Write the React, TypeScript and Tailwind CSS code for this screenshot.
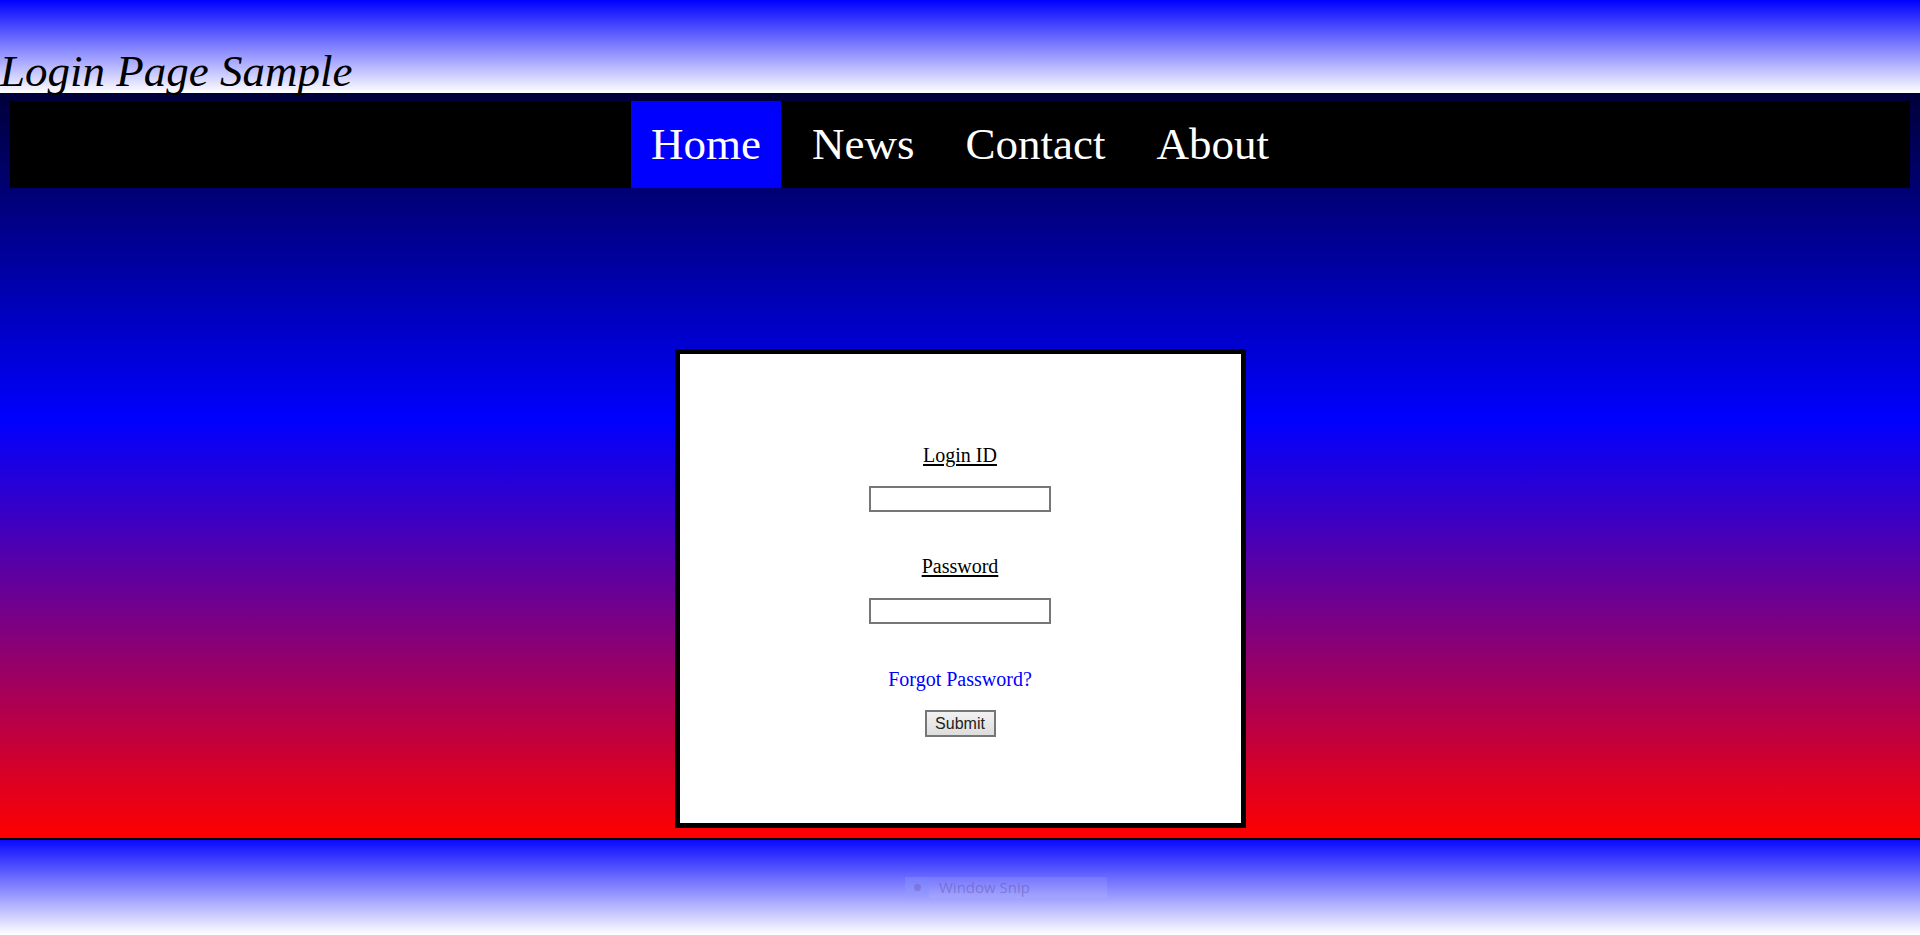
import React from "react";

const serif = { fontFamily: '"Liberation Serif", "Times New Roman", serif' };

const NavLink = ({ label, active }: { label: string; active?: boolean }) => {
  return (
    <a
      href="#"
      className={
        active
          ? "px-[20px] py-[18px] leading-[51px] text-white bg-[#0000ff]"
          : "px-[20px] py-[18px] leading-[51px] text-white"
      }
    >
      {label}
    </a>
  );
};

const App = () => {
  return (
    <div className="w-full h-[935px] overflow-hidden bg-white" style={serif}>
      {/* header */}
      <header className="h-[93px] bg-[linear-gradient(#0000ff,#ffffff)]">
        <h1 className="pt-[46px] text-[45px] leading-[50px] italic text-black font-normal" style={serif}>
          Login Page Sample
        </h1>
      </header>

      {/* main */}
      <main className="h-[745px] pt-[8px] bg-[linear-gradient(#000039,#0000ff_43.8%,#ff0000)]">
        <nav className="mx-[10px] h-[87px] bg-black flex justify-center gap-[11px] text-[45px]">
          <NavLink label="Home" active />
          <NavLink label="News" />
          <NavLink label="Contact" />
          <NavLink label="About" />
        </nav>

        <div className="mt-[161px] mx-auto w-[571px] h-[479px] border-[5px] border-black bg-white">
          <form className="pt-[90px] flex flex-col items-center text-[20px] leading-[23px] text-black">
            <label className="underline underline-offset-[2px]">Login ID</label>
            <input type="text" className="mt-[19px] w-[182px] h-[26px] border-2 border-[#767676] bg-white outline-none" />
            <label className="mt-[43px] underline underline-offset-[2px]">Password</label>
            <input type="password" className="mt-[20px] w-[182px] h-[26px] border-2 border-[#767676] bg-white outline-none" />
            <a href="#" className="mt-[44px] text-[#0000ff]">
              Forgot Password?
            </a>
            <button
              type="button"
              className="mt-[19px] w-[71px] h-[27px] border-2 border-[#767676] bg-[linear-gradient(#f2f2f2,#dddddd)] text-[16px] leading-[20px] text-[#222]"
              style={{ fontFamily: '"Liberation Sans", Arial, sans-serif' }}
            >
              Submit
            </button>
          </form>
        </div>
      </main>

      {/* footer */}
      <footer className="relative h-[97px] border-t-2 border-black bg-[linear-gradient(#0a0aff,#ffffff)]">
        <div className="absolute left-[905px] top-[37px] w-[202px] h-[21px] flex items-center bg-[rgba(210,210,240,0.12)]">
          <div className="w-[24px] h-full flex items-center justify-center bg-[rgba(120,140,255,0.25)]">
            <span className="w-[7px] h-[7px] rounded-full bg-[rgba(110,80,170,0.35)]"></span>
          </div>
          <span
            className="ml-[10px] text-[15px] text-[rgba(70,60,140,0.35)]"
            style={{ fontFamily: '"Open Sans", "Noto Sans", sans-serif' }}
          >
            Window Snip
          </span>
        </div>
      </footer>
    </div>
  );
};

export default App;
